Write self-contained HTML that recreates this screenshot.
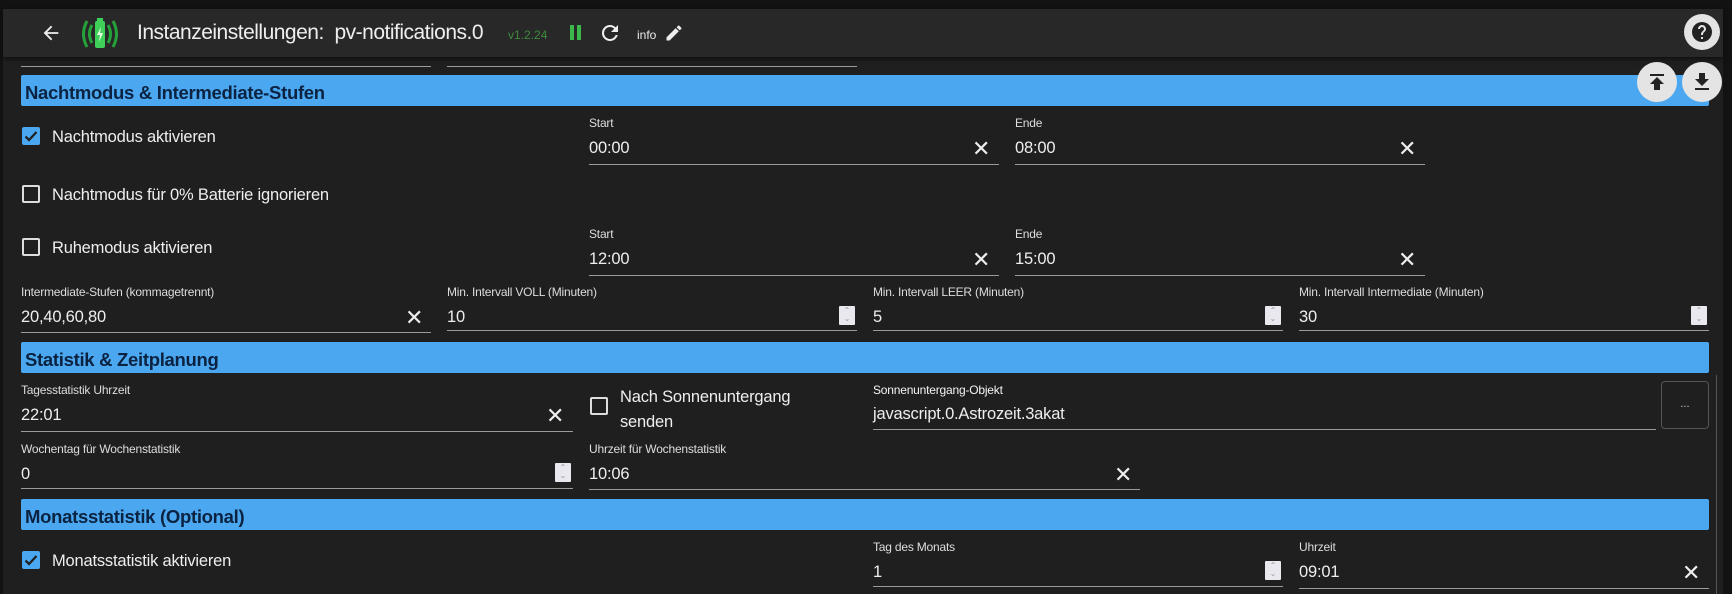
<!DOCTYPE html>
<html><head><meta charset="utf-8"><style>
*{margin:0;padding:0;box-sizing:border-box}
body{width:1732px;height:594px;background:#121212;overflow:hidden;font-family:"Liberation Sans",sans-serif;color:#e8e8e8;position:relative}
.a{position:absolute}
#content{left:3px;top:57px;width:1720px;height:537px;background:#1f1f1f}
#hdr{left:3px;top:9px;width:1720px;height:48px;background:#282828;box-shadow:0 2px 4px rgba(0,0,0,.5)}
.bar{left:21px;width:1688px;height:31px;background:#4ba8f0;border-radius:2px;color:#0b2240;font-weight:bold;font-size:18.5px;padding:7px 0 0 4px;letter-spacing:-0.3px}
.lbl{font-size:12px;color:#ddd;letter-spacing:-0.2px}
.val{font-size:16.5px;color:#eee;letter-spacing:-0.2px}
.ul{height:1px;background:#9a9a9a}
.x{font-size:22px;color:#eee;width:20px;height:20px}
.cb{width:18px;height:18px;border:2px solid #ddd;border-radius:2px}
.cbc{width:18px;height:18px;background:#4ba8f0;border-radius:2px}
.spin{width:16px;height:19px;background:#e8e8ee;border-radius:1px;color:#999;font-size:8px;line-height:8px;text-align:center;padding-top:1px}
.circ{border-radius:50%;background:#e4e4e4}
</style></head><body>
<div class="a" id="content"></div>
<div class="a" id="hdr"></div>
<svg class="a" style="left:40px;top:22px" width="22" height="22" viewBox="0 0 24 24"><path d="M20 11H7.8l5.6-5.6L12 4l-8 8 8 8 1.4-1.4L7.8 13H20z" fill="#eee"/></svg>
<svg class="a" style="left:78px;top:16px" width="44" height="36" viewBox="0 0 44 36"><path d="M9 5 Q2 18 9 31" stroke="#25a23a" stroke-width="3" fill="none"/><path d="M14 9 Q9 18 14 27" stroke="#25a23a" stroke-width="3" fill="none"/><path d="M35 5 Q42 18 35 31" stroke="#25a23a" stroke-width="3" fill="none"/><path d="M30 9 Q35 18 30 27" stroke="#25a23a" stroke-width="3" fill="none"/><rect x="17" y="5" width="10" height="27" rx="2" fill="#3fd05a"/><rect x="19" y="2" width="6" height="3" fill="#3fd05a"/><path d="M23 11 L19 19 H22 L21 26 L25 17 H22 Z" fill="#e8ffe8"/></svg>
<div class="a" style="left:137px;top:21px;font-size:21px;color:#eee;letter-spacing:-0.5px">Instanzeinstellungen:&nbsp; pv-notifications.0</div>
<div class="a" style="left:508px;top:28px;font-size:12px;color:#3d8a3d">v1.2.24</div>
<div class="a" style="left:570px;top:25px;width:4px;height:15px;background:#3cb84a"></div>
<div class="a" style="left:577px;top:25px;width:4px;height:15px;background:#3cb84a"></div>
<svg class="a" style="left:598px;top:21px" width="24" height="24" viewBox="0 0 24 24"><path d="M17.65 6.35A7.96 7.96 0 0 0 12 4a8 8 0 1 0 7.73 10h-2.08A6 6 0 1 1 12 6c1.66 0 3.14.69 4.22 1.78L13 11h7V4z" fill="#eee"/></svg>
<div class="a" style="left:637px;top:28px;font-size:12px;color:#eee">info</div>
<svg class="a" style="left:664px;top:23px" width="20" height="20" viewBox="0 0 24 24"><path d="M3 17.25V21h3.75L17.8 9.94l-3.75-3.75zM20.7 7.04a1 1 0 0 0 0-1.41l-2.34-2.34a1 1 0 0 0-1.41 0l-1.83 1.83 3.75 3.75z" fill="#eee"/></svg>
<div class="a circ" style="left:1684px;top:14px;width:36px;height:36px"></div>
<svg class="a" style="left:1690px;top:20px" width="24" height="24" viewBox="0 0 24 24"><path d="M12 2a10 10 0 1 0 0 20 10 10 0 0 0 0-20zm1 17h-2v-2h2zm2.07-7.75-.9.92C13.45 12.9 13 13.5 13 15h-2v-.5c0-1.1.45-2.1 1.170-2.83l1.24-1.26A2 2 0 1 0 10 9H8a4 4 0 1 1 8 0c0 .88-.36 1.68-.93 2.25z" fill="#222"/></svg>
<div class="a ul" style="left:21px;top:66px;width:410px"></div>
<div class="a ul" style="left:447px;top:66px;width:410px"></div>
<div class="a bar" style="top:75px">Nachtmodus &amp; Intermediate-Stufen</div>
<div class="a circ" style="left:1637px;top:62px;width:40px;height:40px"></div>
<svg class="a" style="left:1645px;top:70px" width="24" height="24" viewBox="0 0 24 24"><path d="M5 4h14v2H5zm0 10h4v6h6v-6h4l-7-7z" fill="#222"/></svg>
<div class="a circ" style="left:1682px;top:62px;width:40px;height:40px"></div>
<svg class="a" style="left:1690px;top:70px" width="24" height="24" viewBox="0 0 24 24"><path d="M19 9h-4V3H9v6H5l7 7zM5 18v2h14v-2z" fill="#222"/></svg>

<div class="a cbc" style="left:22px;top:127px"></div>
<svg class="a" style="left:22px;top:127px" width="18" height="18" viewBox="0 0 18 18"><path d="M3.5 9.5l3.5 3.5 7.5-8" stroke="#1f1f1f" stroke-width="2.2" fill="none"/></svg>
<div class="a val" style="left:52px;top:128px">Nachtmodus aktivieren</div>
<div class="a lbl" style="left:589px;top:116px">Start</div>
<div class="a val" style="left:589px;top:139px">00:00</div>
<div class="a ul" style="left:589px;top:164px;width:410px"></div>
<div class="a x" style="left:972px;top:136px">✕</div>
<div class="a lbl" style="left:1015px;top:116px">Ende</div>
<div class="a val" style="left:1015px;top:139px">08:00</div>
<div class="a ul" style="left:1015px;top:164px;width:410px"></div>
<div class="a x" style="left:1398px;top:136px">✕</div>

<div class="a cb" style="left:22px;top:185px"></div>
<div class="a val" style="left:52px;top:186px">Nachtmodus für 0% Batterie ignorieren</div>

<div class="a cb" style="left:22px;top:238px"></div>
<div class="a val" style="left:52px;top:239px">Ruhemodus aktivieren</div>
<div class="a lbl" style="left:589px;top:227px">Start</div>
<div class="a val" style="left:589px;top:250px">12:00</div>
<div class="a ul" style="left:589px;top:275px;width:410px"></div>
<div class="a x" style="left:972px;top:247px">✕</div>
<div class="a lbl" style="left:1015px;top:227px">Ende</div>
<div class="a val" style="left:1015px;top:250px">15:00</div>
<div class="a ul" style="left:1015px;top:275px;width:410px"></div>
<div class="a x" style="left:1398px;top:247px">✕</div>

<div class="a lbl" style="left:21px;top:285px">Intermediate-Stufen (kommagetrennt)</div>
<div class="a val" style="left:21px;top:308px">20,40,60,80</div>
<div class="a ul" style="left:21px;top:332px;width:410px"></div>
<div class="a x" style="left:405px;top:305px">✕</div>
<div class="a lbl" style="left:447px;top:285px">Min. Intervall VOLL (Minuten)</div>
<div class="a val" style="left:447px;top:308px">10</div>
<div class="a ul" style="left:447px;top:330px;width:410px"></div>
<div class="a spin" style="left:839px;top:306px">⌃<br>⌄</div>
<div class="a lbl" style="left:873px;top:285px">Min. Intervall LEER (Minuten)</div>
<div class="a val" style="left:873px;top:308px">5</div>
<div class="a ul" style="left:873px;top:330px;width:410px"></div>
<div class="a spin" style="left:1265px;top:306px">⌃<br>⌄</div>
<div class="a lbl" style="left:1299px;top:285px">Min. Intervall Intermediate (Minuten)</div>
<div class="a val" style="left:1299px;top:308px">30</div>
<div class="a ul" style="left:1299px;top:330px;width:410px"></div>
<div class="a spin" style="left:1691px;top:306px">⌃<br>⌄</div>

<div class="a bar" style="top:342px">Statistik &amp; Zeitplanung</div>
<div class="a" style="left:1716px;top:375px;width:1px;height:219px;background:#555"></div>

<div class="a lbl" style="left:21px;top:383px">Tagesstatistik Uhrzeit</div>
<div class="a val" style="left:21px;top:406px">22:01</div>
<div class="a ul" style="left:21px;top:431px;width:552px"></div>
<div class="a x" style="left:546px;top:403px">✕</div>
<div class="a cb" style="left:590px;top:397px"></div>
<div class="a val" style="left:620px;top:385px;line-height:25px">Nach Sonnenuntergang<br>senden</div>
<div class="a lbl" style="left:873px;top:383px;color:#f4f4f4">Sonnenuntergang-Objekt</div>
<div class="a val" style="left:873px;top:405px">javascript.0.Astrozeit.3akat</div>
<div class="a ul" style="left:873px;top:429px;width:783px"></div>
<div class="a" style="left:1661px;top:381px;width:48px;height:48px;border:1px solid #555;border-radius:4px;color:#ccc;font-size:11px;text-align:center;line-height:44px">...</div>

<div class="a lbl" style="left:21px;top:442px">Wochentag für Wochenstatistik</div>
<div class="a val" style="left:21px;top:465px">0</div>
<div class="a ul" style="left:21px;top:488px;width:552px"></div>
<div class="a spin" style="left:555px;top:463px">⌃<br>⌄</div>
<div class="a lbl" style="left:589px;top:442px">Uhrzeit für Wochenstatistik</div>
<div class="a val" style="left:589px;top:465px">10:06</div>
<div class="a ul" style="left:589px;top:489px;width:551px"></div>
<div class="a x" style="left:1114px;top:462px">✕</div>

<div class="a bar" style="top:499px">Monatsstatistik (Optional)</div>
<div class="a cbc" style="left:22px;top:551px"></div>
<svg class="a" style="left:22px;top:551px" width="18" height="18" viewBox="0 0 18 18"><path d="M3.5 9.5l3.5 3.5 7.5-8" stroke="#1f1f1f" stroke-width="2.2" fill="none"/></svg>
<div class="a val" style="left:52px;top:552px">Monatsstatistik aktivieren</div>
<div class="a lbl" style="left:873px;top:540px">Tag des Monats</div>
<div class="a val" style="left:873px;top:563px">1</div>
<div class="a ul" style="left:873px;top:586px;width:410px"></div>
<div class="a spin" style="left:1265px;top:561px">⌃<br>⌄</div>
<div class="a lbl" style="left:1299px;top:540px">Uhrzeit</div>
<div class="a val" style="left:1299px;top:563px">09:01</div>
<div class="a ul" style="left:1299px;top:588px;width:410px"></div>
<div class="a x" style="left:1682px;top:560px">✕</div>
</body></html>
